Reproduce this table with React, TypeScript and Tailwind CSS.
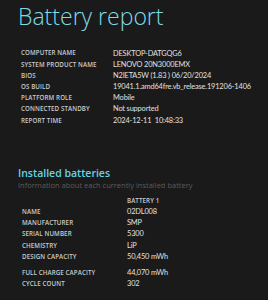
import React from "react";

const systemRows: [string, string][] = [
  ["COMPUTER NAME", "DESKTOP-DATGQG6"],
  ["SYSTEM PRODUCT NAME", "LENOVO 20N3000EMX"],
  ["BIOS", "N2IETA5W (1.83 ) 06/20/2024"],
  ["OS BUILD", "19041.1.amd64fre.vb_release.191206-1406"],
  ["PLATFORM ROLE", "Mobile"],
  ["CONNECTED STANDBY", "Not supported"],
  ["REPORT TIME", "2024-12-11  10:48:33"],
];

const batteryRows: [string, string][] = [
  ["NAME", "02DL008"],
  ["MANUFACTURER", "SMP"],
  ["SERIAL NUMBER", "5300"],
  ["CHEMISTRY", "LiP"],
  ["DESIGN CAPACITY", "50,450 mWh"],
];

const Label = ({ children }: { children: React.ReactNode }) => (
  <span className="whitespace-nowrap text-[6.2px] font-semibold tracking-[0.1px] text-[#cbcbcb]">
    {children}
  </span>
);

const Value = ({ children }: { children: React.ReactNode }) => (
  <span
    className="whitespace-pre text-[7.4px] tracking-[-0.15px] text-[#e0e0e0]"
    style={{ fontFamily: "Lato, sans-serif" }}
  >
    {children}
  </span>
);

const App = () => {
  return (
    <main
      className="h-[300px] w-[268px] overflow-hidden bg-[#1a1a1a]"
      style={{ fontFamily: '"Open Sans", sans-serif' }}
    >
      <h1 className="pl-[18px] pt-[1px] text-[23px] font-light leading-[30px] text-[#7fdbe9]">
        Battery report
      </h1>

      <section className="mt-[16.5px] pl-[21px]">
        {systemRows.map(([label, value]) => (
          <div key={label} className="grid h-[11.2px] grid-cols-[92px_1fr] items-center">
            <Label>{label}</Label>
            <Value>{value}</Value>
          </div>
        ))}
      </section>

      <section className="mt-[41px] pl-[18px]">
        <h2 className="text-[10.5px] font-semibold leading-[13px] text-[#67d3e3]">
          Installed batteries
        </h2>
        <p className="text-[7.5px] leading-[11px] text-[#5c5c5c]">
          Information about each currently installed battery
        </p>

        <div className="mt-[4px] pl-[4px]">
          <div className="grid h-[11.2px] grid-cols-[105px_1fr] items-center">
            <span />
            <Label>BATTERY 1</Label>
          </div>
          {batteryRows.map(([label, value]) => (
            <div key={label} className="grid h-[11.2px] grid-cols-[105px_1fr] items-center">
              <Label>{label}</Label>
              <Value>{value}</Value>
            </div>
          ))}
          <div className="mt-[5px] grid h-[11.2px] grid-cols-[105px_1fr] items-center">
            <Label>FULL CHARGE CAPACITY</Label>
            <Value>44,070 mWh</Value>
          </div>
          <div className="grid h-[11.2px] grid-cols-[105px_1fr] items-center">
            <Label>CYCLE COUNT</Label>
            <Value>302</Value>
          </div>
        </div>
      </section>
    </main>
  );
};

export default App;
